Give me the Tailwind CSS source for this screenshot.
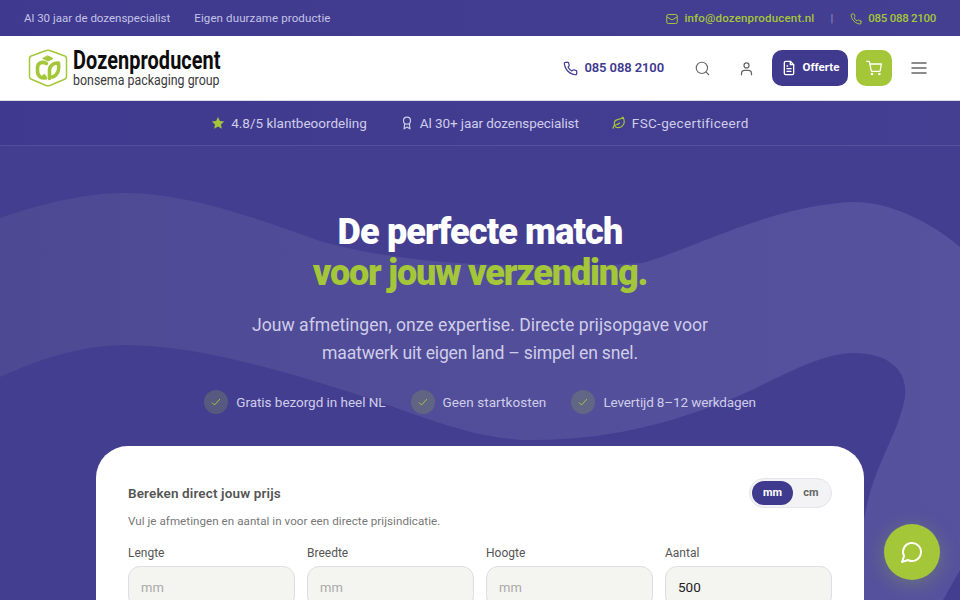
<!DOCTYPE html>
<html lang="nl">
<head>
  <meta charset="UTF-8" />
  <title>Dozenproducent</title>
  <script src="https://cdn.jsdelivr.net/npm/@tailwindcss/browser@4"></script>
</head>
<body class="h-[600px] overflow-hidden bg-[#443e91] font-['Roboto',sans-serif]">

  <!-- top bar -->
  <div class="h-9 pt-px bg-linear-to-r from-[#3f3a8f] to-[#453f92] flex items-center justify-between px-6 text-[11.5px] text-[#c5c3e6]">
    <div class="flex gap-6">
      <span>Al 30 jaar de dozenspecialist</span>
      <span class="tracking-[0.12px]">Eigen duurzame productie</span>
    </div>
    <div class="flex items-center text-[#a4c639] font-medium">
      <svg class="w-3 h-3 mr-1.5" viewBox="0 0 24 24" fill="none" stroke="currentColor" stroke-width="2"><rect x="1.500" y="3" width="21" height="18" rx="3"/><path d="M2 8l10 6 10-6"/></svg>
      <span class="tracking-[0.18px]">info@dozenproducent.nl</span>
      <span class="ml-[16px] mr-[17px] text-[#8f8cc4] font-normal">|</span>
      <svg class="w-3 h-3 mr-1.5" viewBox="0 0 24 24" fill="none" stroke="currentColor" stroke-width="2" stroke-linecap="round" stroke-linejoin="round"><path d="M22 17v3a2 2 0 0 1-2.200 2 19.800 19.800 0 0 1-8.600-3 19.500 19.500 0 0 1-6-6 19.800 19.800 0 0 1-3-8.700A2 2 0 0 1 4.100 2h3a2 2 0 0 1 2 1.700c.1 1 .4 1.900.7 2.800a2 2 0 0 1-.5 2.100L8.100 9.900a16 16 0 0 0 6 6l1.300-1.300a2 2 0 0 1 2.100-.4c.9.3 1.800.6 2.800.7a2 2 0 0 1 1.700 2z"/></svg>
      <span class="tracking-[-0.28px]">085 088 2100</span>
    </div>
  </div>

  <!-- header -->
  <header class="h-[65px] bg-white border-b border-[#dcdce8] flex items-center pl-7 pr-[33px]">
    <svg class="w-[40px] h-[38px] mr-[5px] shrink-0" viewBox="0 0 40 38" fill="none" stroke="#a4c639" stroke-linecap="round" stroke-linejoin="round">
      <path d="M17.500 1.800a6 6 0 0 1 5 0L35.500 6.500A3.500 3.500 0 0 1 38.500 10v17a3.500 3.500 0 0 1-2.500 3.500L22.500 36.200a6 6 0 0 1-5 0L4 30.500A3.500 3.500 0 0 1 1.500 27V10A3.500 3.500 0 0 1 4.500 6.500z" stroke-width="1.500"/>
      <path d="M18.500 14.500C14 12 9.500 14 9.500 19v3c0 5 3.500 7.500 8 7l-1.500-2" stroke-width="3.600"/>
      <path d="M21.500 29.500V21c0-4 4-7.500 9-7 1 6-.5 12-6 14" stroke-width="3.600"/>
      <path d="M20 7l5 2.500-5 2.500-5-2.500z" fill="#a4c639" stroke-width="1"/>
    </svg>
    <div class="flex flex-col items-start w-[147px]">
      <span class="origin-left scale-x-[0.765] font-bold text-[26px] leading-[21px] tracking-[0.1px] whitespace-nowrap text-[#0d0d0d]">Dozenproducent</span>
      <span class="mt-[2px] origin-left scale-x-[0.80] text-[15.500px] leading-[14px] whitespace-nowrap text-[#3b3b3b]">bonsema packaging group</span>
    </div>
    <div class="ml-auto flex items-center">
      <svg class="w-[15px] h-[15px] mr-[6px] text-[#403a8f]" viewBox="0 0 24 24" fill="none" stroke="currentColor" stroke-width="2" stroke-linecap="round" stroke-linejoin="round"><path d="M22 17v3a2 2 0 0 1-2.200 2 19.800 19.800 0 0 1-8.600-3 19.500 19.500 0 0 1-6-6 19.800 19.800 0 0 1-3-8.700A2 2 0 0 1 4.100 2h3a2 2 0 0 1 2 1.700c.1 1 .4 1.900.7 2.800a2 2 0 0 1-.5 2.100L8.100 9.900a16 16 0 0 0 6 6l1.300-1.300a2 2 0 0 1 2.100-.4c.9.3 1.800.6 2.800.7a2 2 0 0 1 1.700 2z"/></svg>
      <span class="text-[13px] font-semibold tracking-[-0.1px] text-[#403a8f] mr-[31px]">085 088 2100</span>
      <svg class="w-[15px] h-[15px] mr-[29px] text-[#666]" viewBox="0 0 24 24" fill="none" stroke="currentColor" stroke-width="1.800" stroke-linecap="round"><circle cx="11" cy="11" r="9"/><path d="M22 22l-4.500-4.500"/></svg>
      <svg class="w-[15px] h-[15px] mr-[18px] text-[#666]" viewBox="0 0 24 24" fill="none" stroke="currentColor" stroke-width="2" stroke-linecap="round"><circle cx="12" cy="7" r="4"/><path d="M4 22v-2a5 5 0 0 1 5-5h6a5 5 0 0 1 5 5v2"/></svg>
      <button class="w-[76px] h-9 rounded-[10px] bg-[#403a8f] text-white text-[11.500px] font-bold flex items-center justify-center gap-1.5 mr-2">
        <svg class="w-4 h-4" viewBox="0 0 24 24" fill="none" stroke="currentColor" stroke-width="2" stroke-linecap="round" stroke-linejoin="round"><path d="M14 2H7a2 2 0 0 0-2 2v16a2 2 0 0 0 2 2h10a2 2 0 0 0 2-2V7z"/><path d="M14 2v5h5M9 13h6M9 17h6M9 9h1"/></svg>
        Offerte
      </button>
      <button class="w-9 h-9 rounded-[10px] bg-[#a4c639] text-white flex items-center justify-center mr-[19px]">
        <svg class="w-4 h-4" viewBox="0 0 24 24" fill="none" stroke="currentColor" stroke-width="2" stroke-linecap="round" stroke-linejoin="round"><circle cx="9" cy="21" r="1"/><circle cx="20" cy="21" r="1"/><path d="M1 2h4l2.700 13.400a2 2 0 0 0 2 1.600h9.700a2 2 0 0 0 2-1.600L23 6H6"/></svg>
      </button>
      <svg class="w-4 h-4 text-[#666]" viewBox="0 0 16 16" fill="none" stroke="currentColor" stroke-width="1.500" stroke-linecap="round"><path d="M1 3h14M1 8h14M1 13h14"/></svg>
    </div>
  </header>

  <!-- trust bar -->
  <div class="h-[45px] bg-linear-to-r from-[#3f3a8f] to-[#453f92] border-b border-white/10 flex items-center justify-center gap-[33px] text-[13.500px] text-[#cfcdea] relative z-10">
    <span class="flex items-center gap-[6px]">
      <svg class="w-[14px] h-[14px] text-[#a4c639]" viewBox="0 0 24 24" fill="currentColor"><path d="M12 1.500l3.200 7 7.300.9-5.400 5.100 1.500 7.500-6.600-3.800-6.600 3.800 1.500-7.500L1.500 9.400l7.300-.9z"/></svg>
      4.8/5 klantbeoordeling
    </span>
    <span class="flex items-center gap-[6px] tracking-[-0.08px]">
      <svg class="w-[14px] h-[14px]" viewBox="0 0 24 24" fill="none" stroke="currentColor" stroke-width="2" stroke-linecap="round" stroke-linejoin="round"><circle cx="12" cy="8" r="6"/><path d="M8 13l-1 9 5-3 5 3-1-9"/></svg>
      Al 30+ jaar dozenspecialist
    </span>
    <span class="flex items-center gap-[6px] tracking-[0.33px]">
      <svg class="w-[14px] h-[14px] text-[#a4c639]" viewBox="0 0 24 24" fill="none" stroke="currentColor" stroke-width="2" stroke-linecap="round" stroke-linejoin="round"><path d="M11 20A7 7 0 0 1 9.800 6.100C15.500 5 17 4.500 19 2c1 2 2 4.200 2 8 0 5.500-4.800 10-10 10z"/><path d="M2 21c0-3 1.900-5.400 5-6 2.500-.5 5-2 6-3"/></svg>
      FSC-gecertificeerd
    </span>
  </div>

  <!-- hero -->
  <section class="relative h-[454px] overflow-hidden flex flex-col items-center">
    <!-- wave shape, coordinates are hero-relative (page y - 146) -->
    <svg class="absolute inset-0 w-full h-full" viewBox="0 0 960 454" fill="none">
      <defs>
        <linearGradient id="wave" x1="0" x2="1" y1="0" y2="0">
          <stop offset="0" stop-color="#4d4993"/>
          <stop offset="1" stop-color="#56529e"/>
        </linearGradient>
      </defs>
      <path fill="url(#wave)" d="M0 72C40 58 85 47 125 47C185 47 250 70 320 95C400 118 520 125 643 117C700 100 770 60 853 56C895 56 935 80 960 101V424L943 454H858C856 420 862 372 872 340C884 305 900 280 905 251C908 225 890 207 853 207C810 208 760 245 710 261C660 280 600 294 533 294C470 294 420 268 340 243C270 221 190 199 125 199C80 199 35 215 0 231Z"/>
    </svg>
    <h1 class="relative mt-[66px] text-center text-[36px] leading-[41px] font-black text-white tracking-[-0.85px]">
      De perfecte match<br><span class="text-[#a4c639] tracking-[-1.15px]">voor jouw verzending.</span>
    </h1>
    <p class="relative mt-[17px] w-[520px] text-center text-[17.600px] leading-[28px] text-[#cfcdea]">Jouw afmetingen, onze expertise. Directe prijsopgave voor <span class="tracking-[-0.2px]">maatwerk uit eigen land – simpel en snel.</span></p>
    <div class="relative mt-[23px] flex gap-[25px] text-[13.500px] text-[#cfcdea]">
      <span class="flex items-center gap-2"><span class="w-6 h-6 rounded-full bg-[#a4c639]/20 flex items-center justify-center"><svg class="w-3 h-3 text-[#a4c639]" viewBox="0 0 24 24" fill="none" stroke="currentColor" stroke-width="2"><path d="M4 13l5 5L20 6"/></svg></span><span class="tracking-[-0.04px]">Gratis bezorgd in heel NL</span></span>
      <span class="flex items-center gap-2"><span class="w-6 h-6 rounded-full bg-[#a4c639]/20 flex items-center justify-center"><svg class="w-3 h-3 text-[#a4c639]" viewBox="0 0 24 24" fill="none" stroke="currentColor" stroke-width="2"><path d="M4 13l5 5L20 6"/></svg></span><span class="tracking-[0.06px]">Geen startkosten</span></span>
      <span class="flex items-center gap-2"><span class="w-6 h-6 rounded-full bg-[#a4c639]/20 flex items-center justify-center"><svg class="w-3 h-3 text-[#a4c639]" viewBox="0 0 24 24" fill="none" stroke="currentColor" stroke-width="2"><path d="M4 13l5 5L20 6"/></svg></span><span class="tracking-[-0.13px]">Levertijd 8–12 werkdagen</span></span>
    </div>

    <!-- calculator -->
    <div class="relative mt-8 w-[768px] h-[300px] shrink-0 bg-white rounded-[32px] px-8 pt-8">
      <div class="flex items-center justify-between">
        <h2 class="pt-[1px] text-[13.500px] font-semibold tracking-[0.14px] text-[#555]">Bereken direct jouw prijs</h2>
        <div class="flex items-center w-[83px] h-[30px] p-[2px] rounded-full bg-[#f3f3f5] border border-[#e4e4ea] text-[11px] font-bold text-[#666]">
          <span class="w-[41px] h-[24px] rounded-full bg-[#403a8f] text-white flex items-center justify-center">mm</span>
          <span class="flex-1 text-center">cm</span>
        </div>
      </div>
      <p class="mt-[5px] text-[11.600px] tracking-[0.05px] text-[#777]">Vul je afmetingen en aantal in voor een directe prijsindicatie.</p>
      <div class="mt-[14px] grid grid-cols-4 gap-3">
        <label class="text-[12px] text-[#555]">Lengte<span class="mt-[4px] flex items-center h-[42px] px-3 rounded-xl bg-[#f4f4f0] border border-[#dedee0] text-[13px] text-[#aaa]">mm</span></label>
        <label class="text-[12px] text-[#555]">Breedte<span class="mt-[4px] flex items-center h-[42px] px-3 rounded-xl bg-[#f4f4f0] border border-[#dedee0] text-[13px] text-[#aaa]">mm</span></label>
        <label class="text-[12px] text-[#555]">Hoogte<span class="mt-[4px] flex items-center h-[42px] px-3 rounded-xl bg-[#f4f4f0] border border-[#dedee0] text-[13px] text-[#aaa]">mm</span></label>
        <label class="text-[12px] text-[#555]">Aantal<span class="mt-[4px] flex items-center h-[42px] px-3 rounded-xl bg-[#f4f4f0] border border-[#dedee0] text-[13.500px] text-[#222]">500</span></label>
      </div>
    </div>
  </section>

  <!-- chat button -->
  <button class="fixed left-[884px] top-[524px] w-14 h-14 rounded-full bg-[#a4c639] text-white flex items-center justify-center shadow-[0_4px_20px_rgba(164,198,57,0.3)]">
    <svg class="w-6 h-6" viewBox="0 0 24 24" fill="none" stroke="currentColor" stroke-width="2" stroke-linecap="round" stroke-linejoin="round"><path d="M7.900 20A9 9 0 1 0 4 16.100L2 22z"/></svg>
  </button>
</body>
</html>
